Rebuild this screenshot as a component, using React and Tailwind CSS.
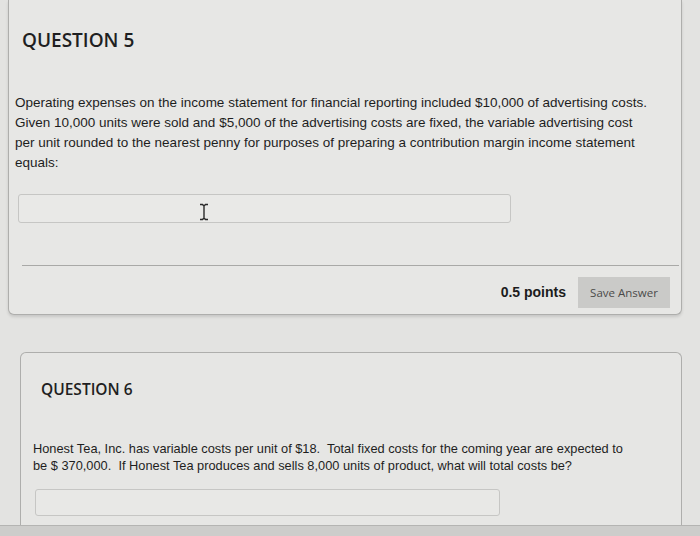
import React from 'react';

// I-beam text cursor drawn over the first answer field
const IBeam = () => (
  <svg width="10" height="18" viewBox="0 0 10 18" className="absolute left-[180px] top-[8px]">
    <path d="M1 1.5h2.5L5 3l1.5-1.5H9M5 3v12M1 16.5h2.5L5 15l1.5 1.5H9" fill="none" stroke="#2a2a2a" strokeWidth="1.4" />
  </svg>
);

const Q5 = () => (
  <div className="ml-[8px] mr-[18px] border border-t-0 border-[#aeaeac] rounded-b-[6px] bg-[#e7e7e5] shadow-[0_2px_3px_rgba(0,0,0,0.12)]">
    <div className="pt-[30px] pl-[13px] h-[50px]">
      <h2 className="text-[19px] leading-[20px] font-semibold text-[#1f1f22] font-['Open_Sans',sans-serif]">
        QUESTION 5
      </h2>
    </div>
    <div className="mt-[43px] pl-[6px] text-[13.5px] leading-[20px] text-[#1e1e1e] whitespace-nowrap">
      <p>Operating expenses on the income statement for financial reporting included $10,000 of advertising costs.</p>
      <p>Given 10,000 units were sold and $5,000 of the advertising costs are fixed, the variable advertising cost</p>
      <p>per unit rounded to the nearest penny for purposes of preparing a contribution margin income statement</p>
      <p>equals:</p>
    </div>
    <div className="relative mt-[21px] ml-[9px] w-[493px] h-[29px] border border-[#c6c6c4] rounded-[3px] bg-[#e9e9e7]">
      <IBeam />
    </div>
    <div className="mt-[42px] ml-[13px] mr-[2px] h-px bg-[#a9a9a7]" />
    <div className="mt-[11px] pb-[6px] pr-[11px] flex justify-end items-center gap-[12px]">
      <span className="text-[14px] font-bold text-[#1c1c1c]">0.5 points</span>
      <button className="w-[92px] h-[31px] bg-[#cacac8] text-[11.5px] text-[#4a4a4a] font-['Open_Sans',sans-serif]">
        Save Answer
      </button>
    </div>
  </div>
);

const Q6 = () => (
  <div className="mt-[37px] ml-[20px] mr-[18px] border border-b-0 border-[#aeaeac] rounded-t-[6px] bg-[#e6e6e4] h-[173px]">
    <div className="pt-[26px] pl-[20px] h-[46px]">
      <h2 className="text-[15.5px] leading-[20px] font-semibold text-[#1f1f22] font-['Open_Sans',sans-serif]">
        QUESTION 6
      </h2>
    </div>
    <div className="mt-[41px] pl-[12px] text-[12.8px] leading-[17px] text-[#1e1e1e] whitespace-pre">
      <p>Honest Tea, Inc. has variable costs per unit of $18.  Total fixed costs for the coming year are expected to</p>
      <p>be $ 370,000.  If Honest Tea produces and sells 8,000 units of product, what will total costs be?</p>
    </div>
    <div className="mt-[15px] ml-[14px] w-[465px] h-[27px] border border-[#c6c6c4] rounded-[3px] bg-[#e8e8e6]" />
  </div>
);

export default function App() {
  return (
    <div className="w-[700px] h-[536px] overflow-hidden flex flex-col bg-[#e3e3e1] font-['Liberation_Sans',Arial,sans-serif]">
      <Q5 />
      <Q6 />
      <div className="h-px bg-[#b4b4b2]" />
      <div className="flex-1 bg-[#cdcdcb]" />
    </div>
  );
}
